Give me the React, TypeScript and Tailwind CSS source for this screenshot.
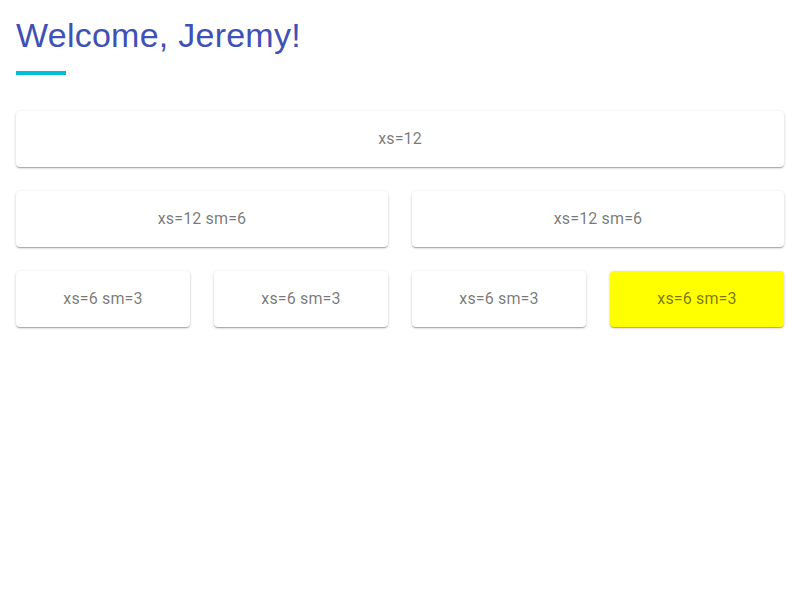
import React from "react";

function Paper({ children, className = "" }: { children: React.ReactNode; className?: string }) {
  return (
    <div
      className={
        "rounded-[4px] p-4 text-center text-base leading-6 tracking-[0.15px] text-black/54 shadow-[0px_1px_3px_0px_rgba(0,0,0,0.2),0px_1px_1px_0px_rgba(0,0,0,0.14),0px_2px_1px_-1px_rgba(0,0,0,0.12)] " +
        className
      }
    >
      {children}
    </div>
  );
}

export default function App() {
  return (
    <div className="min-h-[600px] bg-white p-4 font-['Roboto',sans-serif]">
      <h1 className="font-['Liberation_Sans',Arial,sans-serif] text-[34px] leading-[39px] font-normal tracking-[0.25px] text-[#3f51b5]">
        Welcome, Jeremy!
      </h1>
      <div className="mt-[16px] h-1 w-[50px] bg-[#00bcd4]" />

      <div className="mt-[36px] flex flex-col gap-6">
        <Paper className="bg-white">xs=12</Paper>
        <div className="grid grid-cols-2 gap-6">
          <Paper className="bg-white">xs=12 sm=6</Paper>
          <Paper className="bg-white">xs=12 sm=6</Paper>
        </div>
        <div className="grid grid-cols-4 gap-6">
          <Paper className="bg-white">xs=6 sm=3</Paper>
          <Paper className="bg-white">xs=6 sm=3</Paper>
          <Paper className="bg-white">xs=6 sm=3</Paper>
          <Paper className="bg-[#ffff00]">xs=6 sm=3</Paper>
        </div>
      </div>
    </div>
  );
}
